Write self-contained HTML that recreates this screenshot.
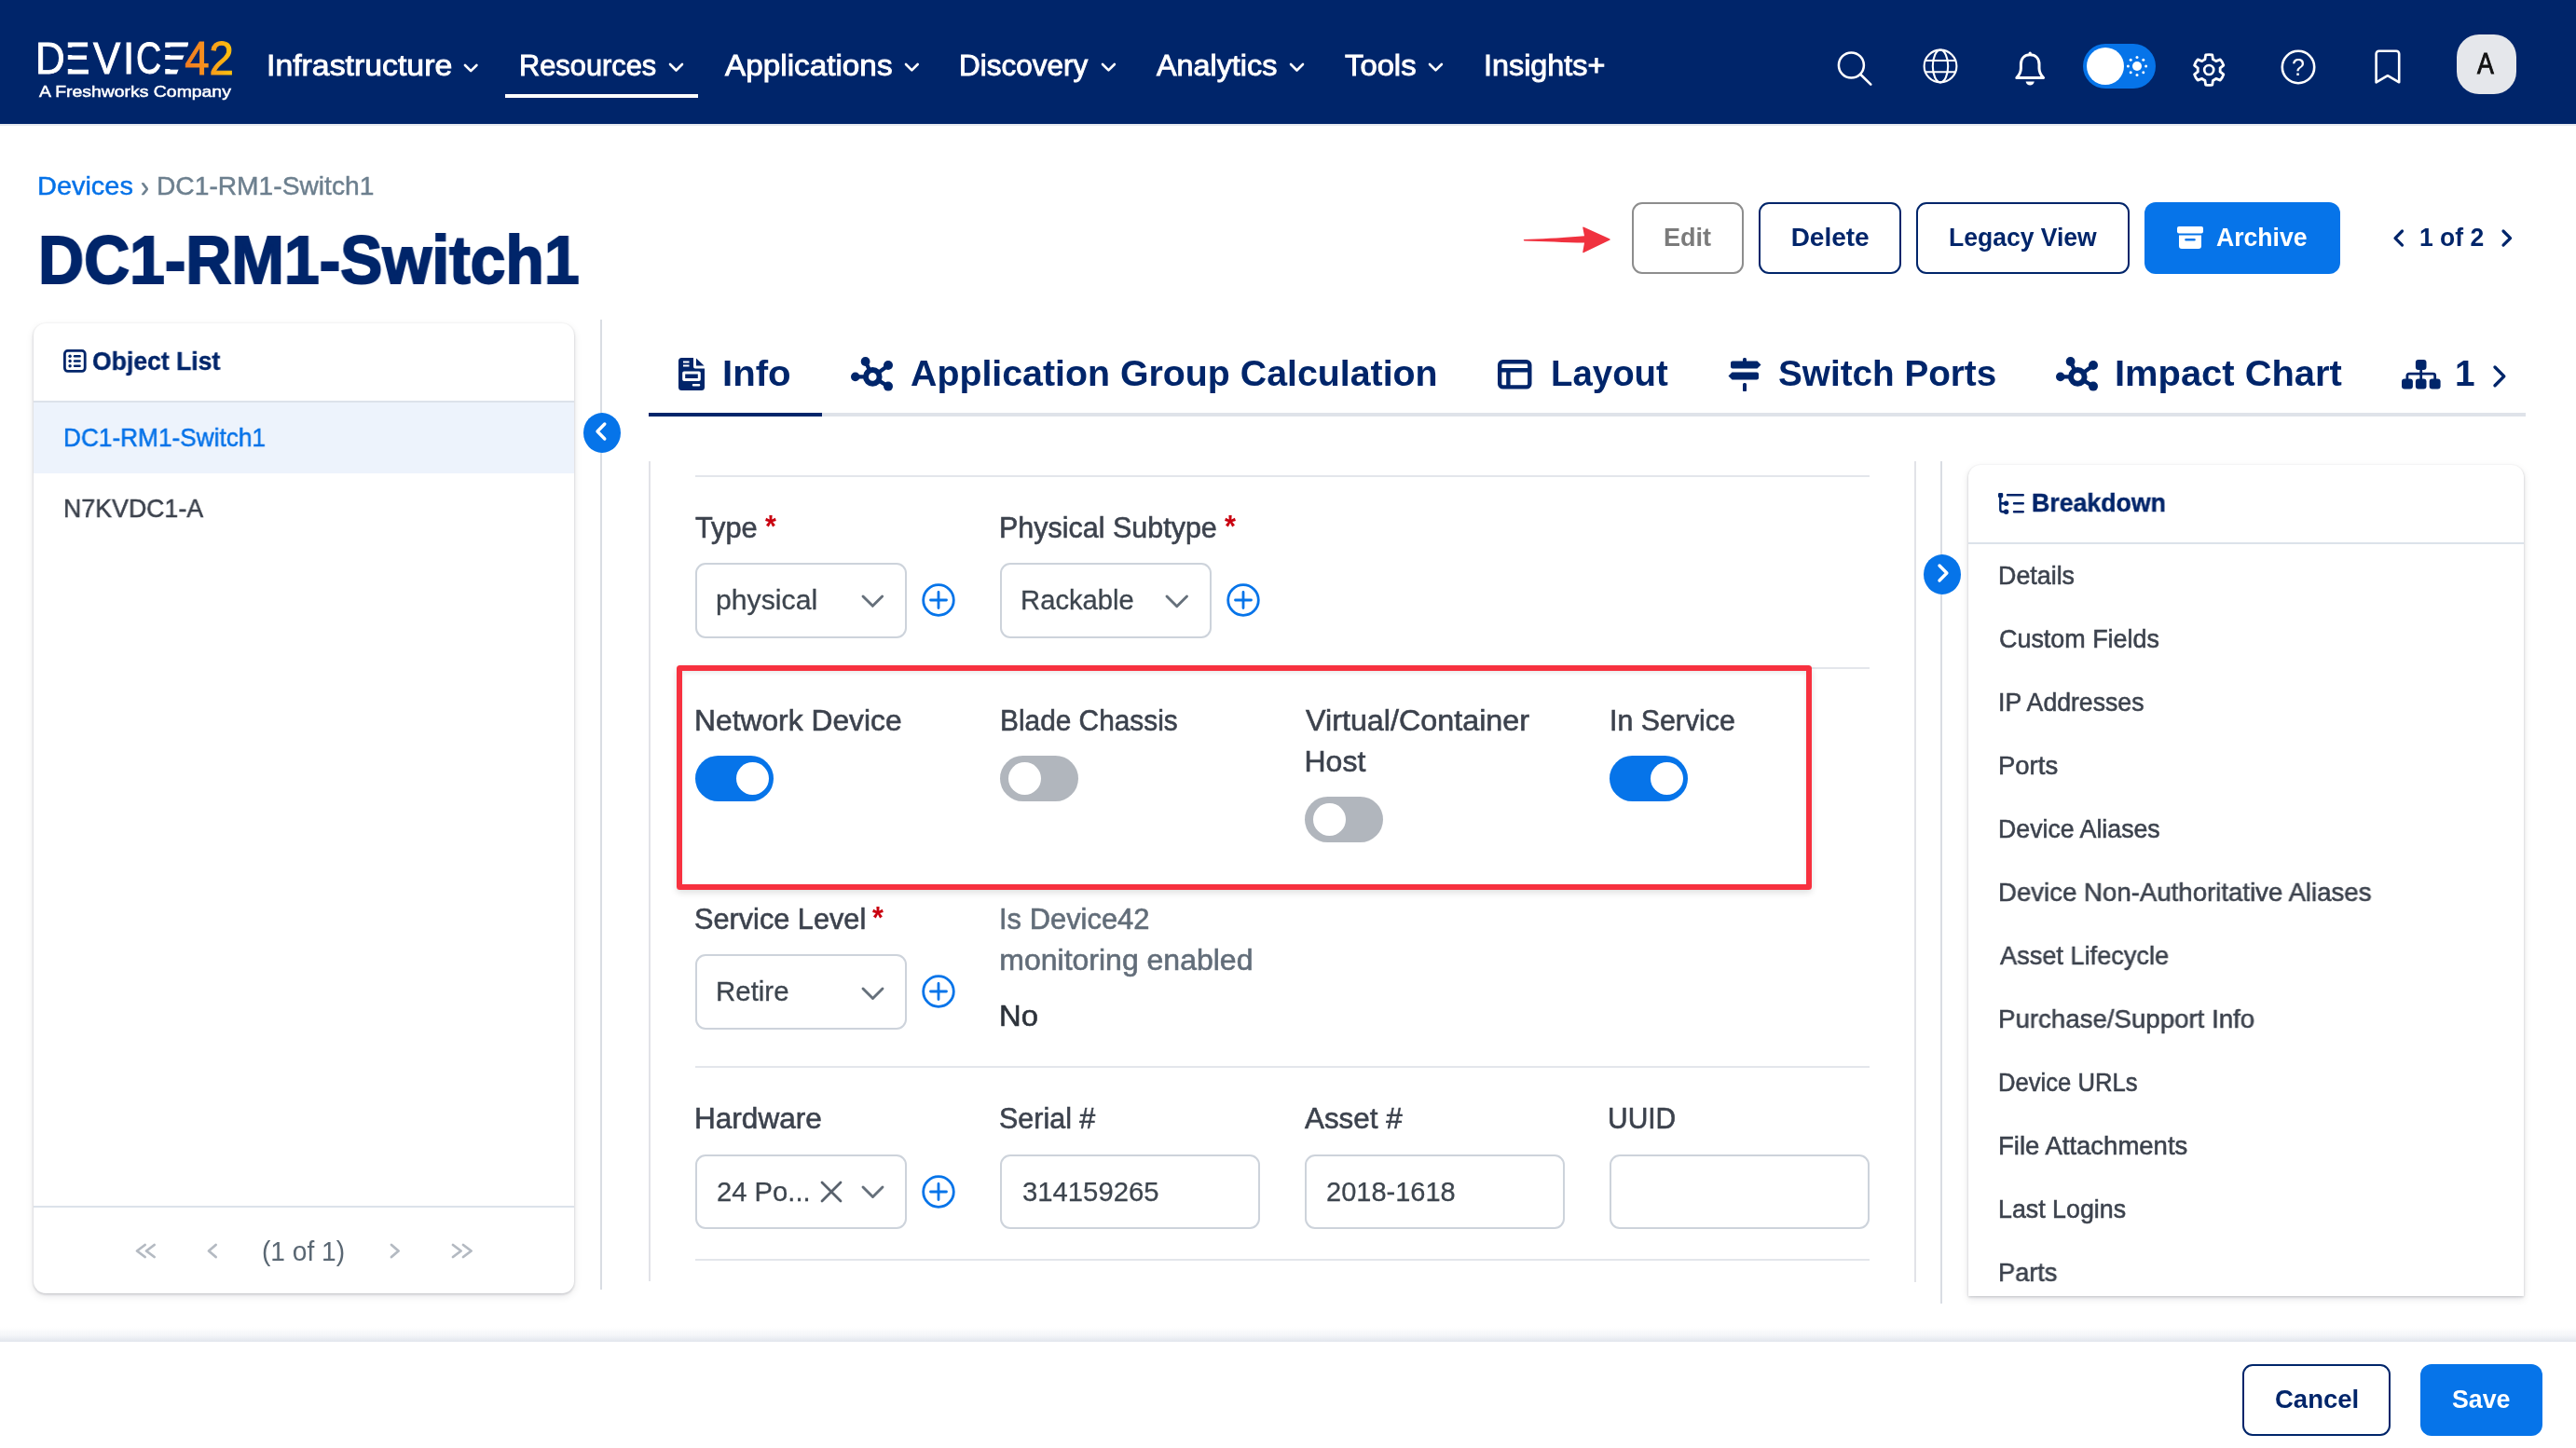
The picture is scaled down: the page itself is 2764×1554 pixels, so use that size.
<!DOCTYPE html>
<html lang="en"><head><meta charset="utf-8"><title>DC1-RM1-Switch1 | Device42</title><style>
html,body{margin:0;padding:0;background:#fff;}
body{width:2764px;height:1554px;position:relative;overflow:hidden;font-family:"Liberation Sans",sans-serif;}
.t{position:absolute;white-space:nowrap;line-height:1;transform-origin:0 0;display:block;}
.b{position:absolute;box-sizing:border-box;display:block;}
svg.b{overflow:visible;}
#root{position:absolute;left:0;top:0;width:2764px;height:1554px;will-change:transform;transform-origin:0 0;}
@media (max-width:1400px){#root{transform:scale(.5);}}
</style></head><body><div id="root">
<div class="b" style="left:0px;top:0px;width:2764px;height:133px;background:#00256a;"></div>
<div class="b" style="left:0px;top:133px;width:2764px;height:2px;background:#e6e9ef;"></div>
<span class="t" style="left:37.95px;top:39.25px;font-size:47.2px;color:#fff;-webkit-text-stroke:0.9px #fff;"><span style="display:inline-block;transform-origin:0 39.95px;margin-right:-2.11px;transform:scaleX(0.9296);">D</span><span style="display:inline-block;transform-origin:0 39.95px;margin-right:-1.88px;transform:scaleX(0.8321);">E</span><span style="display:inline-block;transform-origin:0 39.95px;margin-right:0.58px;transform:scaleX(0.9290);">V</span><span style="display:inline-block;transform-origin:0 39.95px;margin-right:0.85px;transform:scaleX(0.9307);">I</span><span style="display:inline-block;transform-origin:0 39.95px;margin-right:-6.05px;transform:scaleX(0.7975);">C</span><span style="display:inline-block;transform-origin:0 39.95px;margin-right:-6.83px;transform:scaleX(0.9688);">E</span><span style="display:inline-block;transform-origin:0 39.95px;margin-right:0.00px;position:relative;z-index:1;transform:translateY(1.30px) scale(1.0000,1.0699);-webkit-text-stroke:1.03px transparent;background:linear-gradient(90deg,#f37b20 0%,#f7931e 45%,#ffc60b 100%);-webkit-background-clip:text;background-clip:text;color:transparent;">42</span></span>
<div class="b" style="left:71.5px;top:50.6px;width:6.900000000000006px;height:8.299999999999997px;background:#00256a;"></div>
<div class="b" style="left:71.5px;top:64.1px;width:6.900000000000006px;height:9.800000000000011px;background:#00256a;"></div>
<div class="b" style="left:175.7px;top:50.6px;width:6.900000000000006px;height:8.299999999999997px;background:#00256a;"></div>
<div class="b" style="left:175.7px;top:64.1px;width:6.900000000000006px;height:9.800000000000011px;background:#00256a;"></div>
<svg class="b" style="left:186px;top:42px;" width="26" height="41" viewBox="0 0 26 41" fill="none"><path d="M18.300 0H26V41H2.300Z" fill="#00256a"/></svg>
<span class="t" style="left:41.85px;top:89.61px;font-size:17px;color:#fff;transform:scaleX(1.1407);-webkit-text-stroke:0.5px #fff;">A Freshworks Company</span>
<span class="t" style="left:285.74px;top:55.19px;font-size:31.2px;color:#fff;transform:scaleX(1.0842);-webkit-text-stroke:0.9px #fff;">Infrastructure</span>
<svg class="b" style="left:497.3px;top:67.5px;" width="16.399999999999977" height="10.199999999999989" viewBox="-2 -2 16.399999999999977 10.199999999999989" fill="none"><path d="M0 0 L6.199999999999989 6.199999999999989 L12.399999999999977 0" stroke="#fff" stroke-width="2.6" stroke-linecap="round" stroke-linejoin="round"/></svg>
<span class="t" style="left:557.19px;top:55.19px;font-size:31.2px;color:#fff;transform:scaleX(0.9875);-webkit-text-stroke:0.9px #fff;">Resources</span>
<svg class="b" style="left:716.6999999999999px;top:67.34999999999997px;" width="17.000000000000114" height="10.500000000000057" viewBox="-2 -2 17.000000000000114 10.500000000000057" fill="none"><path d="M0 0 L6.500000000000057 6.500000000000057 L13.000000000000114 0" stroke="#fff" stroke-width="2.6" stroke-linecap="round" stroke-linejoin="round"/></svg>
<span class="t" style="left:777.65px;top:55.19px;font-size:31.2px;color:#fff;transform:scaleX(1.0676);-webkit-text-stroke:0.9px #fff;">Applications</span>
<svg class="b" style="left:970.0px;top:67.42499999999998px;" width="16.700000000000045" height="10.350000000000023" viewBox="-2 -2 16.700000000000045 10.350000000000023" fill="none"><path d="M0 0 L6.350000000000023 6.350000000000023 L12.700000000000045 0" stroke="#fff" stroke-width="2.6" stroke-linecap="round" stroke-linejoin="round"/></svg>
<span class="t" style="left:1029.33px;top:55.19px;font-size:31.2px;color:#fff;transform:scaleX(1.0089);-webkit-text-stroke:0.9px #fff;">Discovery</span>
<svg class="b" style="left:1181.2px;top:67.37499999999997px;" width="16.90000000000009" height="10.450000000000045" viewBox="-2 -2 16.90000000000009 10.450000000000045" fill="none"><path d="M0 0 L6.4500000000000455 6.4500000000000455 L12.900000000000091 0" stroke="#fff" stroke-width="2.6" stroke-linecap="round" stroke-linejoin="round"/></svg>
<span class="t" style="left:1241.45px;top:55.19px;font-size:31.2px;color:#fff;transform:scaleX(1.0366);-webkit-text-stroke:0.9px #fff;">Analytics</span>
<svg class="b" style="left:1383.0px;top:67.35px;" width="17.0" height="10.5" viewBox="-2 -2 17.0 10.5" fill="none"><path d="M0 0 L6.5 6.5 L13.0 0" stroke="#fff" stroke-width="2.6" stroke-linecap="round" stroke-linejoin="round"/></svg>
<span class="t" style="left:1443.49px;top:55.19px;font-size:31.2px;color:#fff;transform:scaleX(1.0515);-webkit-text-stroke:0.9px #fff;">Tools</span>
<svg class="b" style="left:1532.3px;top:67.37499999999997px;" width="16.90000000000009" height="10.450000000000045" viewBox="-2 -2 16.90000000000009 10.450000000000045" fill="none"><path d="M0 0 L6.4500000000000455 6.4500000000000455 L12.900000000000091 0" stroke="#fff" stroke-width="2.6" stroke-linecap="round" stroke-linejoin="round"/></svg>
<span class="t" style="left:1591.57px;top:55.19px;font-size:31.2px;color:#fff;transform:scaleX(1.0368);-webkit-text-stroke:0.9px #fff;">Insights+</span>
<div class="b" style="left:541.7px;top:101px;width:207.29999999999995px;height:4px;background:#fff;"></div>
<svg class="b" style="left:1968px;top:52px;" width="44" height="44" viewBox="0 0 44 44" fill="none"><circle cx="18.400" cy="18" r="13.500" stroke="#fff" stroke-width="2.500"/><path d="M28.200 27.800 L39.300 38.600" stroke="#fff" stroke-width="2.600" stroke-linecap="round"/></svg>
<svg class="b" style="left:2062px;top:51.3px;" width="40" height="40" viewBox="0 0 40 40" fill="none"><g stroke="#fff" stroke-width="2.100"><circle cx="20" cy="20" r="17.400"/><ellipse cx="20" cy="20" rx="8.200" ry="17.400"/><path d="M3.800 14H36.200M3.800 26.300H36.200"/></g></svg>
<svg class="b" style="left:2158px;top:52px;" width="40" height="42" viewBox="0 0 40 42" fill="none"><path d="M5.800 31.500 C8.800 28.500 10.300 25.500 10.400 21.500 V17 C10.400 10.500 14.500 6.800 20.200 6.800 S30 10.500 30 17 V21.500 C30.100 25.500 31.600 28.500 34.600 31.500 Z" stroke="#fff" stroke-width="3" stroke-linejoin="round"/><path d="M20.200 6.500V5" stroke="#fff" stroke-width="3.200" stroke-linecap="round"/><path d="M15.600 35.600 H24.800 C24.300 38.300 22.500 39.600 20.200 39.600 S16.100 38.300 15.600 35.600Z" fill="#fff"/></svg>
<div class="b" style="left:2234.8px;top:47px;width:78.5px;height:47.599999999999994px;background:#0674e9;border-radius:24px;"></div>
<div class="b" style="left:2239px;top:51px;width:40px;height:40px;background:#fff;border-radius:50%;"></div>
<svg class="b" style="left:2281.2px;top:59px;" width="24" height="24" viewBox="0 0 24 24" fill="none"><circle cx="12" cy="12" r="5" fill="#fff"/><circle cx="21.60" cy="12.00" r="1.5" fill="#fff"/><circle cx="18.79" cy="18.79" r="1.5" fill="#fff"/><circle cx="12.00" cy="21.60" r="1.5" fill="#fff"/><circle cx="5.21" cy="18.79" r="1.5" fill="#fff"/><circle cx="2.40" cy="12.00" r="1.5" fill="#fff"/><circle cx="5.21" cy="5.21" r="1.5" fill="#fff"/><circle cx="12.00" cy="2.40" r="1.5" fill="#fff"/><circle cx="18.79" cy="5.21" r="1.5" fill="#fff"/></svg>
<svg class="b" style="left:2350px;top:55px;" width="40" height="40" viewBox="0 0 40 40" fill="none"><path d="M15.90 8.80 L16.65 3.99 A16.4 16.4 0 0 1 23.75 3.99 L24.50 8.80 A12 12 0 0 1 27.75 10.67 L32.29 8.92 A16.4 16.4 0 0 1 35.84 15.07 L32.05 18.12 A12 12 0 0 1 32.05 21.88 L35.84 24.93 A16.4 16.4 0 0 1 32.29 31.08 L27.75 29.33 A12 12 0 0 1 24.50 31.20 L23.75 36.01 A16.4 16.4 0 0 1 16.65 36.01 L15.90 31.20 A12 12 0 0 1 12.65 29.33 L8.11 31.08 A16.4 16.4 0 0 1 4.56 24.93 L8.35 21.88 A12 12 0 0 1 8.35 18.12 L4.56 15.07 A16.4 16.4 0 0 1 8.11 8.92 L12.65 10.67 A12 12 0 0 1 15.90 8.80Z" stroke="#fff" stroke-width="2.800" stroke-linejoin="round"/><circle cx="20.200" cy="20" r="5" stroke="#fff" stroke-width="2.700"/></svg>
<svg class="b" style="left:2446px;top:51.5px;" width="40" height="40" viewBox="0 0 40 40" fill="none"><circle cx="20" cy="20" r="17.2" stroke="#fff" stroke-width="2.6"/><text x="20" y="29" font-family="Liberation Sans, sans-serif" font-size="25" font-weight="400" fill="#fff" text-anchor="middle">?</text></svg>
<svg class="b" style="left:2546px;top:52px;" width="32" height="40" viewBox="0 0 32 40" fill="none"><path d="M3.600 5.700 a3 3 0 0 1 3-3 h18.600 a3 3 0 0 1 3 3 V36.300 L15.900 29.200 L3.600 36.300Z" stroke="#fff" stroke-width="2.600" stroke-linejoin="round"/></svg>
<div class="b" style="left:2636px;top:37px;width:64px;height:64px;background:#e5e7eb;border-radius:24px;"></div>
<span class="t" style="left:2658.45px;top:54.13px;font-size:30.8px;color:#111;transform:scaleX(0.8669);-webkit-text-stroke:0.9px #111;">A</span>
<span class="t" style="left:39.50px;top:186.20px;font-size:28px;color:#0572e8;transform:scaleX(1.0329);-webkit-text-stroke:0.45px #0572e8;">Devices</span>
<span class="t" style="left:151.15px;top:184.41px;font-size:32px;color:#6c7f8e;transform:scaleX(0.8375);-webkit-text-stroke:0.6px #6c7f8e;">›</span>
<span class="t" style="left:167.96px;top:186.20px;font-size:28px;color:#6c7f8e;transform:scaleX(1.0066);-webkit-text-stroke:0.45px #6c7f8e;">DC1-RM1-Switch1</span>
<span class="t" style="left:41.04px;top:244.28px;font-size:71.5px;color:#00256a;font-weight:700;transform:scaleX(0.9491);-webkit-text-stroke:1.9px #00256a;">DC1-RM1-Switch1</span>
<svg class="b" style="left:1630px;top:238px;" width="104" height="40" viewBox="0 0 104 40" fill="none"><path d="M5.500 19 C25 18.300 50 17 70 15.300 L68.300 6.500 Q68 5 69.500 5.700 L97 18.200 Q98.500 19 97 19.800 L69.500 33 Q68 33.700 68.300 32.200 L70 22.600 C50 22 25 21 5.500 20.400 Q4 19.700 5.500 19Z" fill="#f0323f"/></svg>
<div class="b" style="left:1751px;top:217px;width:120px;height:77px;border:2px solid #8d8d8d;border-radius:11px;background:#fff;"></div>
<span class="t" style="left:1785.31px;top:241.10px;font-size:28px;color:#7b7b7b;font-weight:700;transform:scaleX(0.9655);">Edit</span>
<div class="b" style="left:1887px;top:217px;width:153px;height:77px;border:2px solid #00256a;border-radius:11px;background:#fff;"></div>
<span class="t" style="left:1921.65px;top:241.10px;font-size:28px;color:#00256a;font-weight:700;">Delete</span>
<div class="b" style="left:2056px;top:217px;width:229px;height:77px;border:2px solid #00256a;border-radius:11px;background:#fff;"></div>
<span class="t" style="left:2091.14px;top:241.10px;font-size:28px;color:#00256a;font-weight:700;transform:scaleX(0.9471);">Legacy View</span>
<div class="b" style="left:2301px;top:217px;width:210px;height:77px;background:#0674e9;border-radius:12px;"></div>
<svg class="b" style="left:2335.9px;top:243px;" width="28" height="24" viewBox="0 0 28 24" fill="none"><rect x="0" y="0" width="28" height="7.500" rx="2" fill="#fff"/><path d="M2 9.500H26V21a3 3 0 0 1-3 3H5a3 3 0 0 1-3-3Z M9.500 13a1.200 1.200 0 0 0 0 2.600h9a1.200 1.200 0 0 0 0-2.600Z" fill="#fff" fill-rule="evenodd"/></svg>
<span class="t" style="left:2378.21px;top:241.10px;font-size:28px;color:#fff;font-weight:700;transform:scaleX(0.9493);">Archive</span>
<svg class="b" style="left:2566.6px;top:244.6px;" width="13.5" height="21.099999999999994" viewBox="-3 -3 13.5 21.099999999999994" fill="none"><path d="M7.5 0 L0 7.549999999999997 L7.5 15.099999999999994" stroke="#00256a" stroke-width="3.2" stroke-linecap="round" stroke-linejoin="round"/></svg>
<span class="t" style="left:2596.34px;top:241.10px;font-size:28px;color:#00256a;font-weight:700;transform:scaleX(0.9466);">1 of 2</span>
<svg class="b" style="left:2682.5px;top:244.6px;" width="13.599999999999909" height="21.099999999999994" viewBox="-3 -3 13.599999999999909 21.099999999999994" fill="none"><path d="M0 0 L7.599999999999909 7.549999999999997 L0 15.099999999999994" stroke="#00256a" stroke-width="3.2" stroke-linecap="round" stroke-linejoin="round"/></svg>
<div class="b" style="left:36px;top:347px;width:580px;height:1040.5px;background:#fff;border-radius:13px;box-shadow:0 1px 3px rgba(16,24,40,.22),0 3px 8px rgba(16,24,40,.10);overflow:hidden;"><div class="b" style="left:0;top:84px;width:580px;height:76.500px;background:#edf3fc;"></div><div class="b" style="left:0;top:82.500px;width:580px;height:2px;background:#dce2ea;"></div><div class="b" style="left:0;top:946.500px;width:580px;height:2px;background:#dce2ea;"></div></div>
<svg class="b" style="left:68px;top:375px;" width="24.6" height="25" viewBox="0 0 24.600 25" fill="none"><rect x="1.400" y="1.400" width="21.800" height="22" rx="3.300" stroke="#00256a" stroke-width="2.800"/><g fill="#00256a"><circle cx="7.100" cy="7.300" r="1.700"/><circle cx="7.100" cy="12.500" r="1.700"/><circle cx="7.100" cy="17.700" r="1.700"/><rect x="10.800" y="6.100" width="8" height="2.400" rx="1.200"/><rect x="10.800" y="11.300" width="8" height="2.400" rx="1.200"/><rect x="10.800" y="16.500" width="8" height="2.400" rx="1.200"/></g></svg>
<span class="t" style="left:99.22px;top:374.94px;font-size:27px;color:#00256a;font-weight:700;transform:scaleX(0.9837);-webkit-text-stroke:0.4px #00256a;">Object List</span>
<span class="t" style="left:67.94px;top:456.20px;font-size:28px;color:#0572e8;transform:scaleX(0.9358);-webkit-text-stroke:0.5px #0572e8;">DC1-RM1-Switch1</span>
<span class="t" style="left:67.90px;top:532.30px;font-size:28px;color:#3c424d;transform:scaleX(0.9550);-webkit-text-stroke:0.5px #3c424d;">N7KVDC1-A</span>
<svg class="b" style="left:143.6px;top:1332.5px;" width="14.640000000000015" height="19.0" viewBox="-3 -3 14.640000000000015 19.0" fill="none"><path d="M8.640000000000015 0 L0 6.5 L8.640000000000015 13.0" stroke="#b4bac2" stroke-width="2.8" stroke-linecap="round" stroke-linejoin="round"/></svg>
<svg class="b" style="left:154.16px;top:1332.5px;" width="14.640000000000015" height="19.0" viewBox="-3 -3 14.640000000000015 19.0" fill="none"><path d="M8.640000000000015 0 L0 6.5 L8.640000000000015 13.0" stroke="#b4bac2" stroke-width="2.8" stroke-linecap="round" stroke-linejoin="round"/></svg>
<svg class="b" style="left:221.2px;top:1332.5px;" width="13.600000000000023" height="19.0" viewBox="-3 -3 13.600000000000023 19.0" fill="none"><path d="M7.600000000000023 0 L0 6.5 L7.600000000000023 13.0" stroke="#b4bac2" stroke-width="2.8" stroke-linecap="round" stroke-linejoin="round"/></svg>
<span class="t" style="left:281.30px;top:1328.95px;font-size:29px;color:#5a6773;transform:scaleX(0.9697);">(1 of 1)</span>
<svg class="b" style="left:416.8px;top:1332.5px;" width="13.599999999999966" height="19.0" viewBox="-3 -3 13.599999999999966 19.0" fill="none"><path d="M0 0 L7.599999999999966 6.5 L0 13.0" stroke="#b4bac2" stroke-width="2.8" stroke-linecap="round" stroke-linejoin="round"/></svg>
<svg class="b" style="left:483.2px;top:1332.5px;" width="14.639999999999986" height="19.0" viewBox="-3 -3 14.639999999999986 19.0" fill="none"><path d="M0 0 L8.639999999999986 6.5 L0 13.0" stroke="#b4bac2" stroke-width="2.8" stroke-linecap="round" stroke-linejoin="round"/></svg>
<svg class="b" style="left:493.76px;top:1332.5px;" width="14.639999999999986" height="19.0" viewBox="-3 -3 14.639999999999986 19.0" fill="none"><path d="M0 0 L8.639999999999986 6.5 L0 13.0" stroke="#b4bac2" stroke-width="2.8" stroke-linecap="round" stroke-linejoin="round"/></svg>
<div class="b" style="left:644px;top:343px;width:2px;height:1041px;background:#d9dde3;"></div>
<div class="b" style="left:626px;top:443px;width:40px;height:43px;background:#0674e9;border-radius:50%;"></div>
<svg class="b" style="left:638.4px;top:452.4px;" width="13.800000000000068" height="22.0" viewBox="-3 -3 13.800000000000068 22.0" fill="none"><path d="M7.800000000000068 0 L0 8.0 L7.800000000000068 16.0" stroke="#fff" stroke-width="3.4" stroke-linecap="round" stroke-linejoin="round"/></svg>
<div class="b" style="left:696px;top:443px;width:2013.8000000000002px;height:3.8000000000000114px;background:#dfe3e9;"></div>
<div class="b" style="left:696px;top:443px;width:185.89999999999998px;height:3.8000000000000114px;background:#00256a;"></div>
<span class="t" style="left:775.41px;top:381.96px;font-size:38.8px;color:#00256a;font-weight:700;transform:scaleX(1.0355);">Info</span>
<span class="t" style="left:977.11px;top:381.96px;font-size:38.8px;color:#00256a;font-weight:700;transform:scaleX(1.0132);">Application Group Calculation</span>
<span class="t" style="left:1663.82px;top:381.96px;font-size:38.8px;color:#00256a;font-weight:700;transform:scaleX(0.9897);">Layout</span>
<span class="t" style="left:1908.20px;top:381.96px;font-size:38.8px;color:#00256a;font-weight:700;transform:scaleX(0.9969);">Switch Ports</span>
<span class="t" style="left:2269.23px;top:381.96px;font-size:38.8px;color:#00256a;font-weight:700;transform:scaleX(1.0282);">Impact Chart</span>
<span class="t" style="left:2634.12px;top:381.96px;font-size:38.8px;color:#00256a;font-weight:700;">1</span>
<svg class="b" style="left:727.6px;top:384.4px;" width="28" height="35" viewBox="0 0 28 35" fill="none"><path d="M3.500 0H16V9.500a2 2 0 0 0 2 2H28V31.500a3.500 3.500 0 0 1-3.500 3.500H3.500A3.500 3.500 0 0 1 0 31.500V3.500A3.500 3.500 0 0 1 3.500 0Z M19 0.500 L27.500 8.500H19Z M6 14.500h16a1.800 1.800 0 0 1 1.800 1.800v7a1.800 1.800 0 0 1-1.800 1.800H6a1.800 1.800 0 0 1-1.800-1.800v-7A1.800 1.800 0 0 1 6 14.500Z M7.200 17.500v4.600h13.600v-4.600Z M16 28h6a1.300 1.300 0 0 1 0 2.600h-6a1.300 1.300 0 0 1 0-2.600Z M5 3.600h6.500v2H5Z M5 7.500h6.500v2.100H5Z" fill="#00256a" fill-rule="evenodd"/></svg>
<svg class="b" style="left:913.4px;top:383.2px;" width="46" height="38" viewBox="0 0 46 38" fill="none"><g stroke="#00256a" stroke-width="4.200" stroke-linecap="round"><path d="M4.600 21.400H16M23.300 21.400 L15.600 4.800M23.300 21.400 L40 9.200M23.300 21.400 L40 31.600"/></g><circle cx="23.300" cy="21.400" r="7.300" fill="#fff" stroke="#00256a" stroke-width="6"/><g fill="#00256a"><circle cx="4.800" cy="21.400" r="4.800"/><circle cx="15.600" cy="5" r="4.900"/><circle cx="40" cy="9" r="5"/><circle cx="40" cy="31.600" r="5"/></g></svg>
<svg class="b" style="left:2206px;top:383.2px;" width="46" height="38" viewBox="0 0 46 38" fill="none"><g stroke="#00256a" stroke-width="4.200" stroke-linecap="round"><path d="M4.600 21.400H16M23.300 21.400 L15.600 4.800M23.300 21.400 L40 9.200M23.300 21.400 L40 31.600"/></g><circle cx="23.300" cy="21.400" r="7.300" fill="#fff" stroke="#00256a" stroke-width="6"/><g fill="#00256a"><circle cx="4.800" cy="21.400" r="4.800"/><circle cx="15.600" cy="5" r="4.900"/><circle cx="40" cy="9" r="5"/><circle cx="40" cy="31.600" r="5"/></g></svg>
<svg class="b" style="left:1607px;top:385.5px;" width="36.5" height="31.6" viewBox="0 0 36.500 31.600" fill="none"><rect x="2.200" y="2.200" width="32.100" height="27.200" rx="3.500" stroke="#00256a" stroke-width="4.400"/><path d="M2 11.200H34.500M11.400 11.200V29.500" stroke="#00256a" stroke-width="4.400"/></svg>
<svg class="b" style="left:1853.5px;top:384.4px;" width="36" height="36" viewBox="0 0 36 36" fill="none"><g fill="#00256a"><rect x="16" y="0" width="4" height="36" rx="1.500"/><path d="M5 3.500H31.500L35.500 7.500L31.500 11.500H5a2 2 0 0 1-2-2v-4a2 2 0 0 1 2-2Z"/><path d="M4.500 15.500H31a2 2 0 0 1 2 2v4a2 2 0 0 1-2 2H4.500L0.500 19.500Z"/></g><rect x="16" y="11.500" width="4" height="4" fill="#fff"/><rect x="16" y="23.500" width="4" height="5" fill="#fff"/><rect x="16" y="27" width="4" height="9" rx="1.500" fill="#00256a"/></svg>
<svg class="b" style="left:2576.7px;top:385.5px;" width="41.6" height="31.6" viewBox="0 0 41.600 31.600" fill="none"><g fill="#00256a"><rect x="14.900" y="0" width="11.600" height="11" rx="3"/><rect x="0" y="20.400" width="11.900" height="11.200" rx="3"/><rect x="14.900" y="20.400" width="11.600" height="11.200" rx="3"/><rect x="29.700" y="20.400" width="11.900" height="11.200" rx="3"/></g><path d="M20.700 10V21M5.900 21V17.100a2 2 0 0 1 2-2H33.700a2 2 0 0 1 2 2V21" stroke="#00256a" stroke-width="2.800" fill="none"/></svg>
<svg class="b" style="left:2674.4px;top:390.7px;" width="15.799999999999727" height="25.80000000000001" viewBox="-3 -3 15.799999999999727 25.80000000000001" fill="none"><path d="M0 0 L9.799999999999727 9.900000000000006 L0 19.80000000000001" stroke="#00256a" stroke-width="3.4" stroke-linecap="round" stroke-linejoin="round"/></svg>
<div class="b" style="left:696px;top:495px;width:2px;height:880px;background:#e2e3e8;"></div>
<div class="b" style="left:2054px;top:495px;width:2px;height:881px;background:#e2e3e8;"></div>
<div class="b" style="left:745.8px;top:510px;width:1259.9px;height:2px;background:#e3e6eb;"></div>
<div class="b" style="left:745.8px;top:716.4px;width:1259.9px;height:2.0px;background:#e3e6eb;"></div>
<div class="b" style="left:745.8px;top:1144px;width:1259.9px;height:2px;background:#e3e6eb;"></div>
<div class="b" style="left:745.8px;top:1351px;width:1259.9px;height:2px;background:#e3e6eb;"></div>
<span class="t" style="left:746.30px;top:549.91px;font-size:32px;color:#3c424d;transform:scaleX(0.9618);-webkit-text-stroke:0.6px #3c424d;">Type</span>
<span class="t" style="left:821.00px;top:548.47px;font-size:33px;color:#c9000f;font-weight:700;transform:scaleX(0.9243);">*</span>
<span class="t" style="left:1072.40px;top:549.91px;font-size:32px;color:#3c424d;transform:scaleX(0.9525);-webkit-text-stroke:0.6px #3c424d;">Physical Subtype</span>
<span class="t" style="left:1314.10px;top:548.47px;font-size:33px;color:#c9000f;font-weight:700;transform:scaleX(0.9320);">*</span>
<div class="b" style="left:746px;top:604px;width:227px;height:81px;border:2px solid #cdd3db;border-radius:11px;background:#fff;"></div>
<span class="t" style="left:768.21px;top:630.08px;font-size:29.2px;color:#3d454e;transform:scaleX(1.0354);-webkit-text-stroke:0.3px #3d454e;">physical</span>
<svg class="b" style="left:923.6px;top:638.2249999999999px;" width="24.700000000000045" height="14.350000000000023" viewBox="-2 -2 24.700000000000045 14.350000000000023" fill="none"><path d="M0 0 L10.350000000000023 10.350000000000023 L20.700000000000045 0" stroke="#66707b" stroke-width="2.900" stroke-linecap="round" stroke-linejoin="round"/></svg>
<svg class="b" style="left:988px;top:625px;" width="38" height="38" viewBox="0 0 38 38" fill="none"><circle cx="19" cy="19" r="16.300" stroke="#0674e9" stroke-width="2.800"/><path d="M19 10.500V27.500M10.500 19H27.500" stroke="#0674e9" stroke-width="2.800" stroke-linecap="round"/></svg>
<div class="b" style="left:1073px;top:604px;width:227px;height:81px;border:2px solid #cdd3db;border-radius:11px;background:#fff;"></div>
<span class="t" style="left:1095.08px;top:630.08px;font-size:29.2px;color:#3d454e;-webkit-text-stroke:0.3px #3d454e;">Rackable</span>
<svg class="b" style="left:1249.8000000000002px;top:638.0250000000001px;" width="25.499999999999773" height="14.749999999999886" viewBox="-2 -2 25.499999999999773 14.749999999999886" fill="none"><path d="M0 0 L10.749999999999886 10.749999999999886 L21.499999999999773 0" stroke="#66707b" stroke-width="2.900" stroke-linecap="round" stroke-linejoin="round"/></svg>
<svg class="b" style="left:1315px;top:625px;" width="38" height="38" viewBox="0 0 38 38" fill="none"><circle cx="19" cy="19" r="16.300" stroke="#0674e9" stroke-width="2.800"/><path d="M19 10.500V27.500M10.500 19H27.500" stroke="#0674e9" stroke-width="2.800" stroke-linecap="round"/></svg>
<span class="t" style="left:745.29px;top:756.81px;font-size:32px;color:#3c424d;transform:scaleX(0.9936);-webkit-text-stroke:0.6px #3c424d;">Network Device</span>
<div class="b" style="left:746px;top:811px;width:84px;height:49px;background:#0674e9;border-radius:25px;"></div>
<div class="b" style="left:790px;top:817.9px;width:35.299999999999955px;height:35.30000000000007px;background:#fff;border-radius:50%;"></div>
<span class="t" style="left:1072.75px;top:756.81px;font-size:32px;color:#3c424d;transform:scaleX(0.9325);-webkit-text-stroke:0.6px #3c424d;">Blade Chassis</span>
<div class="b" style="left:1073px;top:811px;width:84px;height:49px;background:#b1b6bd;border-radius:25px;"></div>
<div class="b" style="left:1081.9px;top:817.9px;width:35.299999999999955px;height:35.30000000000007px;background:#fff;border-radius:50%;"></div>
<span class="t" style="left:1400.67px;top:756.81px;font-size:32px;color:#3c424d;transform:scaleX(1.0096);-webkit-text-stroke:0.6px #3c424d;">Virtual/Container</span>
<span class="t" style="left:1399.47px;top:800.71px;font-size:32px;color:#3c424d;-webkit-text-stroke:0.6px #3c424d;">Host</span>
<div class="b" style="left:1400px;top:855px;width:84px;height:49px;background:#b1b6bd;border-radius:25px;"></div>
<div class="b" style="left:1408.9px;top:861.9px;width:35.299999999999955px;height:35.30000000000007px;background:#fff;border-radius:50%;"></div>
<span class="t" style="left:1726.67px;top:756.81px;font-size:32px;color:#3c424d;transform:scaleX(0.9478);-webkit-text-stroke:0.6px #3c424d;">In Service</span>
<div class="b" style="left:1727px;top:811px;width:84px;height:49px;background:#0674e9;border-radius:25px;"></div>
<div class="b" style="left:1771px;top:817.9px;width:35.299999999999955px;height:35.30000000000007px;background:#fff;border-radius:50%;"></div>
<div class="b" style="left:726px;top:714px;width:1218px;height:241px;border:6px solid #f7313f;border-radius:3.500px;box-shadow:0 3px 7px rgba(0,0,0,.13), inset 0 2px 5px rgba(0,0,0,.09);"></div>
<span class="t" style="left:745.48px;top:969.91px;font-size:32px;color:#3c424d;transform:scaleX(0.9590);-webkit-text-stroke:0.6px #3c424d;">Service Level</span>
<span class="t" style="left:936.20px;top:968.47px;font-size:33px;color:#c9000f;font-weight:700;transform:scaleX(0.9243);">*</span>
<div class="b" style="left:746px;top:1024px;width:227px;height:81px;border:2px solid #cdd3db;border-radius:11px;background:#fff;"></div>
<span class="t" style="left:767.56px;top:1050.28px;font-size:29.2px;color:#3d454e;transform:scaleX(1.0088);-webkit-text-stroke:0.3px #3d454e;">Retire</span>
<svg class="b" style="left:923.8px;top:1058.75px;" width="25.000000000000114" height="14.500000000000057" viewBox="-2 -2 25.000000000000114 14.500000000000057" fill="none"><path d="M0 0 L10.500000000000057 10.500000000000057 L21.000000000000114 0" stroke="#66707b" stroke-width="2.900" stroke-linecap="round" stroke-linejoin="round"/></svg>
<svg class="b" style="left:987.8px;top:1045.3px;" width="38" height="38" viewBox="0 0 38 38" fill="none"><circle cx="19" cy="19" r="16.300" stroke="#0674e9" stroke-width="2.800"/><path d="M19 10.500V27.500M10.500 19H27.500" stroke="#0674e9" stroke-width="2.800" stroke-linecap="round"/></svg>
<span class="t" style="left:1071.62px;top:969.91px;font-size:32px;color:#626d79;transform:scaleX(0.9659);-webkit-text-stroke:0.6px #626d79;">Is Device42</span>
<span class="t" style="left:1072.28px;top:1013.81px;font-size:32px;color:#626d79;-webkit-text-stroke:0.6px #626d79;">monitoring enabled</span>
<span class="t" style="left:1071.71px;top:1073.71px;font-size:32px;color:#2d333b;transform:scaleX(1.0243);-webkit-text-stroke:0.6px #2d333b;">No</span>
<span class="t" style="left:744.61px;top:1183.91px;font-size:32px;color:#3c424d;transform:scaleX(0.9864);-webkit-text-stroke:0.6px #3c424d;">Hardware</span>
<span class="t" style="left:1072.39px;top:1183.91px;font-size:32px;color:#3c424d;transform:scaleX(0.9522);-webkit-text-stroke:0.6px #3c424d;">Serial #</span>
<span class="t" style="left:1400.40px;top:1183.91px;font-size:32px;color:#3c424d;transform:scaleX(0.9801);-webkit-text-stroke:0.6px #3c424d;">Asset #</span>
<span class="t" style="left:1725.08px;top:1183.91px;font-size:32px;color:#3c424d;transform:scaleX(0.9358);-webkit-text-stroke:0.6px #3c424d;">UUID</span>
<div class="b" style="left:746px;top:1239px;width:227px;height:80px;border:2px solid #cdd3db;border-radius:11px;background:#fff;"></div>
<span class="t" style="left:768.94px;top:1264.65px;font-size:29px;color:#3d454e;transform:scaleX(1.0068);-webkit-text-stroke:0.25px #3d454e;">24 Po...</span>
<svg class="b" style="left:879px;top:1266px;" width="26" height="26" viewBox="0 0 26 26" fill="none"><path d="M3 3L23 23M23 3L3 23" stroke="#59626d" stroke-width="2.800" stroke-linecap="round"/></svg>
<svg class="b" style="left:923.8px;top:1272.15px;" width="25.000000000000114" height="14.500000000000057" viewBox="-2 -2 25.000000000000114 14.500000000000057" fill="none"><path d="M0 0 L10.500000000000057 10.500000000000057 L21.000000000000114 0" stroke="#66707b" stroke-width="2.900" stroke-linecap="round" stroke-linejoin="round"/></svg>
<svg class="b" style="left:987.8px;top:1259.5px;" width="38" height="38" viewBox="0 0 38 38" fill="none"><circle cx="19" cy="19" r="16.300" stroke="#0674e9" stroke-width="2.800"/><path d="M19 10.500V27.500M10.500 19H27.500" stroke="#0674e9" stroke-width="2.800" stroke-linecap="round"/></svg>
<div class="b" style="left:1073px;top:1239px;width:279px;height:80px;border:2px solid #cdd3db;border-radius:11px;background:#fff;"></div>
<span class="t" style="left:1096.82px;top:1264.65px;font-size:29px;color:#3d454e;transform:scaleX(1.0094);-webkit-text-stroke:0.25px #3d454e;">314159265</span>
<div class="b" style="left:1400px;top:1239px;width:279px;height:80px;border:2px solid #cdd3db;border-radius:11px;background:#fff;"></div>
<span class="t" style="left:1423.05px;top:1264.65px;font-size:29px;color:#3d454e;-webkit-text-stroke:0.25px #3d454e;">2018-1618</span>
<div class="b" style="left:1727px;top:1239px;width:279px;height:80px;border:2px solid #cdd3db;border-radius:11px;background:#fff;"></div>
<div class="b" style="left:2082px;top:495px;width:2px;height:904px;background:#d9dde3;"></div>
<div class="b" style="left:2064px;top:595px;width:40px;height:43px;background:#0674e9;border-radius:50%;"></div>
<svg class="b" style="left:2078.4px;top:604.2px;" width="13.900000000000091" height="22.0" viewBox="-3 -3 13.900000000000091 22.0" fill="none"><path d="M0 0 L7.900000000000091 8.0 L0 16.0" stroke="#fff" stroke-width="3.4" stroke-linecap="round" stroke-linejoin="round"/></svg>
<div class="b" style="left:2111.5px;top:499px;width:596.9000000000001px;height:892px;background:#fff;border-radius:13px 13px 0 0;box-shadow:0 1px 3px rgba(16,24,40,.22),0 3px 8px rgba(16,24,40,.10);"><div class="b" style="left:0;top:82.600px;width:596.900px;height:2px;background:#dce2ea;"></div></div>
<svg class="b" style="left:2144px;top:529px;" width="28" height="23" viewBox="0 0 28 23" fill="none"><g fill="#00256a"><rect x="0" y="0" width="5.200" height="5.200" rx="1.400"/><circle cx="8.600" cy="11.300" r="2.700"/><circle cx="8.600" cy="20.300" r="2.700"/></g><g stroke="#00256a" stroke-width="2.400" fill="none" stroke-linecap="round"><path d="M2.300 3V17.800a2.500 2.500 0 0 0 2.500 2.500H8M2.300 11.300H8"/><path d="M10 2.200H26.800M17 11.300H26.800M17 20.300H26.800"/></g></svg>
<span class="t" style="left:2179.87px;top:526.74px;font-size:27px;color:#00256a;font-weight:700;transform:scaleX(0.9893);-webkit-text-stroke:0.4px #00256a;">Breakdown</span>
<span class="t" style="left:2143.92px;top:604.20px;font-size:28px;color:#3c424d;transform:scaleX(0.9584);-webkit-text-stroke:0.55px #3c424d;">Details</span>
<span class="t" style="left:2144.75px;top:672.20px;font-size:28px;color:#3c424d;transform:scaleX(0.9605);-webkit-text-stroke:0.55px #3c424d;">Custom Fields</span>
<span class="t" style="left:2143.70px;top:740.20px;font-size:28px;color:#3c424d;transform:scaleX(0.9512);-webkit-text-stroke:0.55px #3c424d;">IP Addresses</span>
<span class="t" style="left:2143.87px;top:808.20px;font-size:28px;color:#3c424d;transform:scaleX(0.9811);-webkit-text-stroke:0.55px #3c424d;">Ports</span>
<span class="t" style="left:2143.93px;top:876.20px;font-size:28px;color:#3c424d;transform:scaleX(0.9540);-webkit-text-stroke:0.55px #3c424d;">Device Aliases</span>
<span class="t" style="left:2143.86px;top:944.20px;font-size:28px;color:#3c424d;transform:scaleX(0.9860);-webkit-text-stroke:0.55px #3c424d;">Device Non-Authoritative Aliases</span>
<span class="t" style="left:2146.08px;top:1012.20px;font-size:28px;color:#3c424d;transform:scaleX(0.9695);-webkit-text-stroke:0.55px #3c424d;">Asset Lifecycle</span>
<span class="t" style="left:2143.85px;top:1080.20px;font-size:28px;color:#3c424d;transform:scaleX(0.9876);-webkit-text-stroke:0.55px #3c424d;">Purchase/Support Info</span>
<span class="t" style="left:2144.02px;top:1148.20px;font-size:28px;color:#3c424d;transform:scaleX(0.9152);-webkit-text-stroke:0.55px #3c424d;">Device URLs</span>
<span class="t" style="left:2143.86px;top:1216.20px;font-size:28px;color:#3c424d;transform:scaleX(0.9823);-webkit-text-stroke:0.55px #3c424d;">File Attachments</span>
<span class="t" style="left:2143.92px;top:1284.20px;font-size:28px;color:#3c424d;transform:scaleX(0.9575);-webkit-text-stroke:0.55px #3c424d;">Last Logins</span>
<span class="t" style="left:2143.89px;top:1352.20px;font-size:28px;color:#3c424d;transform:scaleX(0.9714);-webkit-text-stroke:0.55px #3c424d;">Parts</span>
<div class="b" style="left:0px;top:1424px;width:2764px;height:16px;background:linear-gradient(180deg,rgba(226,230,238,0) 0%,rgba(226,230,238,.35) 55%,rgba(224,228,236,.95) 100%);"></div>
<div class="b" style="left:0px;top:1440px;width:2764px;height:114px;background:#fff;"></div>
<div class="b" style="left:2406px;top:1464px;width:159px;height:77px;border:2px solid #00256a;border-radius:11px;background:#fff;"></div>
<span class="t" style="left:2441.20px;top:1488.40px;font-size:28px;color:#00256a;font-weight:700;transform:scaleX(0.9814);">Cancel</span>
<div class="b" style="left:2597px;top:1464px;width:131px;height:77px;background:#0674e9;border-radius:12px;"></div>
<span class="t" style="left:2631.18px;top:1488.40px;font-size:28px;color:#fff;font-weight:700;transform:scaleX(0.9553);">Save</span>
</div></body></html>
